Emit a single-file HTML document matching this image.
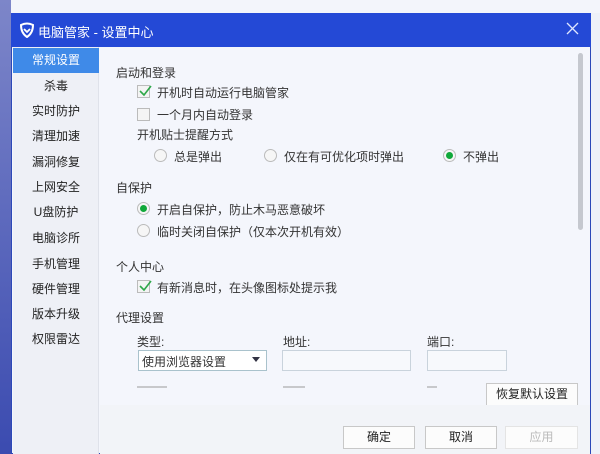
<!DOCTYPE html>
<html><head><meta charset="utf-8"><style>
*{margin:0;padding:0;box-sizing:border-box}
body{width:600px;height:454px;overflow:hidden;background:#f3f5fb;font-family:"Liberation Sans","Noto Sans CJK SC",sans-serif;font-size:12px;color:#333;position:relative}
.a{position:absolute;white-space:nowrap}
.side div{position:absolute;left:13px;width:86px;text-align:center;height:25px;line-height:25px;color:#222}
.cb{position:absolute;width:13px;height:13px;border:1px solid #bbb;background:#f4f4f4}
.rd{position:absolute;width:13px;height:13px;border:1px solid #bbb;border-radius:50%;background:#f6f6f6}
.rd.on::after{content:"";position:absolute;left:2px;top:2px;width:7px;height:7px;border-radius:50%;background:#10a83a}
.inp{position:absolute;height:21px;border:1px solid #c9d3dc;background:#f7f9fc}
.btn{position:absolute;height:23px;border:1px solid #c8c8c8;background:#fcfcfc;text-align:center;line-height:21px;color:#222}
</style></head><body>
<div class="a" style="left:0;top:0;width:11px;height:454px;background:linear-gradient(#7d86c9,#3b4bb0)"></div>
<div class="a" style="left:11px;top:13px;width:580px;height:441px;background:#f4f6fc;border:1px solid #2c48b8"></div>
<div class="a" style="left:591px;top:13px;width:9px;height:441px;background:#eef1f8"></div>
<div class="a" style="left:11px;top:13px;width:580px;height:34px;background:#2449d6"></div>
<svg class="a" style="left:19px;top:22px" width="16" height="16" viewBox="0 0 16 16"><path d="M2 3 Q8 0 14 3 Q14 11 8 15 Q2 11 2 3Z" fill="none" stroke="#fff" stroke-width="2"/><path d="M5 7 L8 10 L11 7" fill="none" stroke="#fff" stroke-width="1.8"/></svg>
<div class="a" style="left:38px;top:22px;color:#fff;font-size:13px">电脑管家 - 设置中心</div>
<svg class="a" style="left:566px;top:22px" width="13" height="13"><path d="M1 1L12 12M12 1L1 12" stroke="#dfe6ff" stroke-width="1.3"/></svg>
<div class="a" style="left:13px;top:47px;width:86px;height:407px;background:#eef0f6;border-right:1px solid #dfe2ea"></div>
<div class="a" style="left:13px;top:48px;width:86px;height:25px;background:#3f8ae8"></div>
<div class="side">
<div style="top:48px;color:#fff">常规设置</div><div style="top:74px">杀毒</div><div style="top:99px">实时防护</div><div style="top:124px">清理加速</div><div style="top:150px">漏洞修复</div><div style="top:175px">上网安全</div><div style="top:200px">U盘防护</div><div style="top:226px">电脑诊所</div><div style="top:252px">手机管理</div><div style="top:277px">硬件管理</div><div style="top:302px">版本升级</div><div style="top:327px">权限雷达</div>
</div>
<div class="a" style="left:578px;top:53px;width:5px;height:177px;background:#c5c8cf;border-radius:3px"></div>
<div class="a" style="left:116px;top:64px">启动和登录</div>
<div class="cb" style="left:137px;top:85px"></div><svg class="a" style="left:138px;top:84px" width="14" height="14"><path d="M2 7L6 11L13 2" fill="none" stroke="#2fa84a" stroke-width="1.6"/></svg>
<div class="a" style="left:157px;top:84px">开机时自动运行电脑管家</div>
<div class="cb" style="left:137px;top:108px"></div>
<div class="a" style="left:157px;top:106px">一个月内自动登录</div>
<div class="a" style="left:137px;top:126px">开机贴士提醒方式</div>
<div class="rd" style="left:154px;top:149px"></div><div class="a" style="left:174px;top:148px">总是弹出</div>
<div class="rd" style="left:264px;top:149px"></div><div class="a" style="left:284px;top:148px">仅在有可优化项时弹出</div>
<div class="rd on" style="left:443px;top:149px"></div><div class="a" style="left:463px;top:148px">不弹出</div>
<div class="a" style="left:116px;top:179px">自保护</div>
<div class="rd on" style="left:137px;top:202px"></div><div class="a" style="left:157px;top:201px">开启自保护，防止木马恶意破坏</div>
<div class="rd" style="left:137px;top:224px"></div><div class="a" style="left:157px;top:223px">临时关闭自保护（仅本次开机有效）</div>
<div class="a" style="left:116px;top:258px">个人中心</div>
<div class="cb" style="left:137px;top:280px"></div><svg class="a" style="left:138px;top:279px" width="14" height="14"><path d="M2 7L6 11L13 2" fill="none" stroke="#2fa84a" stroke-width="1.6"/></svg>
<div class="a" style="left:157px;top:279px">有新消息时，在头像图标处提示我</div>
<div class="a" style="left:116px;top:309px">代理设置</div>
<div class="a" style="left:137px;top:333px">类型:</div><div class="a" style="left:283px;top:333px">地址:</div><div class="a" style="left:427px;top:333px">端口:</div>
<div class="inp" style="left:138px;top:350px;width:129px;background:#fff;border-color:#a9c2cc"></div>
<div class="a" style="left:142px;top:353px">使用浏览器设置</div>
<svg class="a" style="left:252px;top:357px" width="8" height="6"><path d="M0 0H8L4 5Z" fill="#334"/></svg>
<div class="inp" style="left:282px;top:350px;width:129px"></div>
<div class="inp" style="left:427px;top:350px;width:80px"></div>
<div class="a" style="left:137px;top:386px;width:30px;height:2px;background:#999;opacity:.5"></div>
<div class="a" style="left:283px;top:386px;width:22px;height:2px;background:#999;opacity:.5"></div>
<div class="a" style="left:427px;top:386px;width:10px;height:2px;background:#999;opacity:.5"></div>
<div class="btn" style="left:486px;top:383px;width:92px">恢复默认设置</div>
<div class="a" style="left:100px;top:405px;width:490px;height:49px;background:#f2f4f8"></div>
<div class="btn" style="left:343px;top:426px;width:72px">确定</div>
<div class="btn" style="left:425px;top:426px;width:72px">取消</div>
<div class="btn" style="left:505px;top:426px;width:73px;color:#bbb;border-color:#e4e4e4">应用</div>
</body></html>
